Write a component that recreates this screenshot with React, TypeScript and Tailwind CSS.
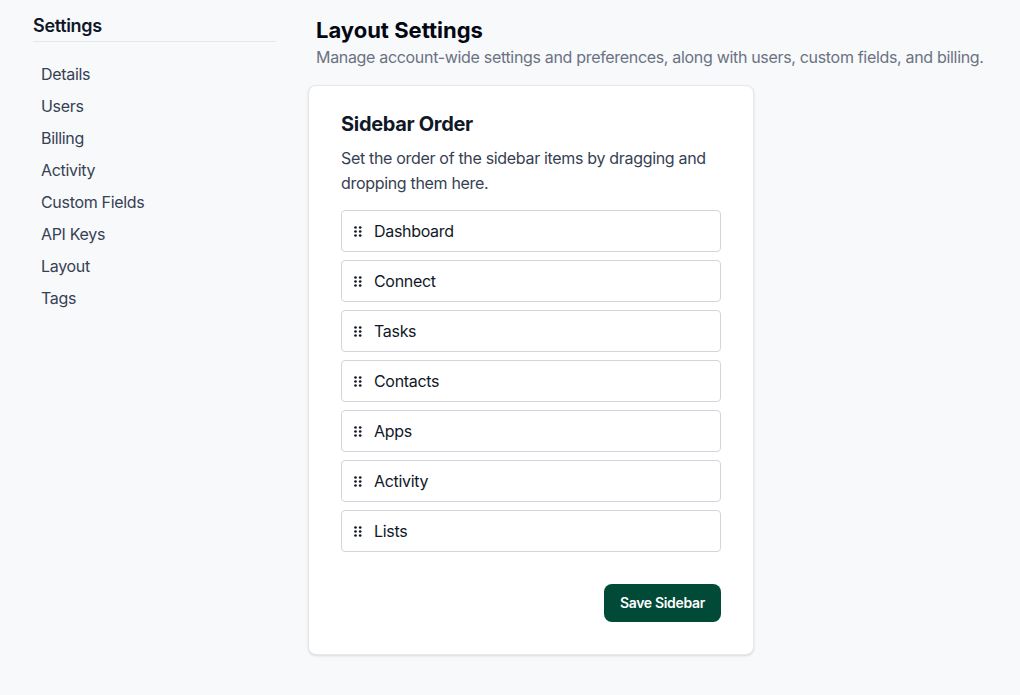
const navItems = ["Details", "Users", "Billing", "Activity", "Custom Fields", "API Keys", "Layout", "Tags"];

const sidebarItems = ["Dashboard", "Connect", "Tasks", "Contacts", "Apps", "Activity", "Lists"];

const DragHandle = () => (
  <svg width="8" height="11" viewBox="0 0 8 11" className="text-gray-900 shrink-0">
    <circle cx="1.5" cy="1.5" r="1.35" fill="currentColor" />
    <circle cx="6.2" cy="1.5" r="1.35" fill="currentColor" />
    <circle cx="1.5" cy="5.5" r="1.35" fill="currentColor" />
    <circle cx="6.2" cy="5.5" r="1.35" fill="currentColor" />
    <circle cx="1.5" cy="9.5" r="1.35" fill="currentColor" />
    <circle cx="6.2" cy="9.5" r="1.35" fill="currentColor" />
  </svg>
);

const App = () => {
  return (
    <div className="min-h-[695px] bg-[#f8f9fb] font-['Inter',sans-serif] tracking-[-0.02em] flex">
      {/* SIDEBAR */}
      <aside className="w-[243px] ml-[33px] pt-3 shrink-0">
        <h2 className="text-lg font-semibold text-gray-900 leading-7 border-b border-gray-200 pb-px">
          Settings
        </h2>
        <nav className="mt-4 pl-2">
          {navItems.map((item) => (
            <div key={item} className="py-1 text-base leading-6 text-gray-700">
              {item}
            </div>
          ))}
        </nav>
      </aside>

      {/* MAIN */}
      <main className="ml-8 pt-4">
        <div className="pl-2">
          <h1 className="text-[22px] font-bold text-gray-950 leading-7 tracking-normal">Layout Settings</h1>
          <p className="mt-px text-base leading-6 text-gray-500">
            Manage account-wide settings and preferences, along with users, custom fields, and billing.
          </p>
        </div>

        <div className="mt-4 w-[446px] bg-white border border-gray-200 rounded-lg shadow-sm px-8 pt-6 pb-8">
          <h3 className="text-xl font-bold text-gray-900 leading-7">Sidebar Order</h3>
          <p className="mt-2 text-base leading-[25px] text-gray-700">
            Set the order of the sidebar items by dragging and dropping them here.
          </p>

          <div className="mt-[14px] flex flex-col gap-2">
            {sidebarItems.map((item) => (
              <div
                key={item}
                className="h-[42px] flex items-center gap-3 px-3 border border-gray-300 rounded bg-white text-base text-gray-900"
              >
                <DragHandle />
                <span>{item}</span>
              </div>
            ))}
          </div>

          <div className="mt-8 flex justify-end">
            <button className="h-[38px] px-4 rounded-lg bg-[#004a37] text-white text-sm font-semibold">
              Save Sidebar
            </button>
          </div>
        </div>
      </main>
    </div>
  );
};

export default App;
